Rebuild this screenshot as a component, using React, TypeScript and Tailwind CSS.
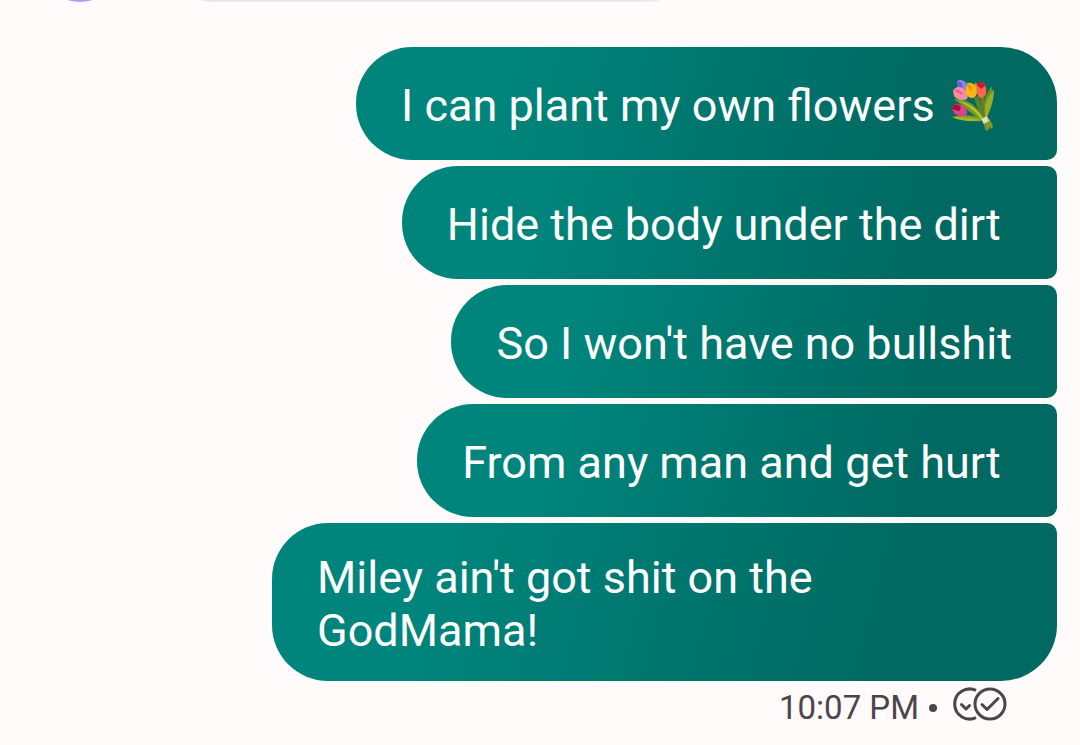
import React from 'react'

interface Message {
    id: number
    text: string
    bouquet?: boolean
}

const MESSAGES: Message[] = [
    { id: 1, text: 'I can plant my own flowers ', bouquet: true },
    { id: 2, text: 'Hide the body under the dirt ' },
    { id: 3, text: "So I won't have no bullshit" },
    { id: 4, text: 'From any man and get hurt ' },
    { id: 5, text: "Miley ain't got shit on the GodMama!" },
]

const BouquetIcon: React.FC = () => (
    <svg
        viewBox="6 7 55 55"
        className="-mt-2 inline-block size-[55px] align-[-11px]"
        role="img"
        aria-label="Bouquet"
    >
        {/* leaves */}
        <path d="M52 16c2 10-1 23-5 32l-5-1c0-12 3-23 10-31z" fill="#6f8f1b" />
        <path d="M54 20c0 11-4 21-8 28l-3-1c1-11 4-20 11-27z" fill="#98ad27" />
        <path d="M36 12l3 9-5 2-1-7z" fill="#8fa82a" />
        <path d="M34 27l5-1 4 22-3-1zM40 27h4l1 20-3-1z" fill="#5f7f2b" />
        <path d="M12 47c10-3 20-2 30 1l-1 3c-10 1-21 0-29-4z" fill="#7d9f22" />
        <path d="M12 47c9 0 20 1 30 3-10 2-21 1-30-3z" fill="#a2b62e" />
        <path d="M14 29c14-1 24 8 29 19l-3 1C33 45 24 37 14 29z" fill="#78981f" />
        <path d="M19 31c11 2 19 9 24 17l-2 1c-5-7-12-13-22-18z" fill="#b3c435" />
        {/* tulips */}
        <path d="M17 11c3-2 7-1 9 2l1 6-5 3-4-4z" fill="#8c86ee" />
        <path d="M17 11l5 2 1 6-4-2z" fill="#6a5dd0" />
        <path d="M13 21c2-5 8-5 12-1 3 3 3 8 2 9-4 2-10 1-13-3z" fill="#f98ba4" />
        <path d="M14 20c4-1 8 1 9 5-4-1-7-3-9-5z" fill="#e8637f" />
        <path d="M27 13c5-1 10 2 10 8 0 4-2 7-5 7-4 0-7-4-6-10z" fill="#fdb714" />
        <path d="M27 13c4 1 6 4 5 9-3-2-5-5-5-9z" fill="#f59700" />
        <path d="M38 13c4-2 7 0 8 5 1 6-1 10-5 10-4-1-6-8-3-15z" fill="#fc6749" />
        <path d="M38 12c3-1 6 1 7 4l-4 3-4-4z" fill="#cf1730" />
        <path d="M13 35c6-2 12 1 14 6 1 3-1 5-4 5-6 1-10-3-11-8z" fill="#dd408c" />
        <path d="M13 35c4-1 7 0 8 3l-2 3-7-2z" fill="#a90f35" />
        {/* stems and band */}
        <path d="M43 51l6-3 4 8-1 3-3-2-1 4-3-1z" fill="#719026" />
        <path d="M47 51l2 8M49 50l3 7" stroke="#9bab36" strokeWidth="1" fill="none" />
        <path d="M41 49l6-3 2 5-5 3z" fill="#e3dfae" />
    </svg>
)

const ReadIcon: React.FC = () => (
    <svg
        viewBox="0 0 54 34"
        className="h-[34px] w-[54px]"
        fill="none"
        stroke="#4d444b"
        strokeWidth="3"
        role="img"
        aria-label="Read"
    >
        <path d="M23 3.400A15 15 0 1 0 23 30.600" />
        <circle cx="37" cy="17" r="15" />
        <path
            d="M8.500 17.500l4.500 4.500 3.500-3.500M29 17.500l5 5L45 11.500"
            strokeLinecap="round"
            strokeLinejoin="round"
        />
    </svg>
)

const App: React.FC = () => (
    <main className="min-h-screen bg-[#fffbfa] font-['Roboto',sans-serif]">
        {/* tail end of the received message above */}
        <header className="flex h-0.5 items-end gap-[37px] overflow-hidden pl-[38px]">
            <div className="size-[84px] shrink-0 rounded-full bg-[#aea5fb]" />
            <div className="h-[113px] w-[543px] rounded-[56px] bg-[#e6e9eb]" />
        </header>

        <ol className="flex flex-col items-end gap-1.5 pt-[45px] pr-[23px]">
            {MESSAGES.map((message) => (
                <li
                    key={message.id}
                    className="flex min-h-[113px] max-w-[785px] items-center rounded-l-[56px] rounded-r-[10px] bg-linear-[105deg,#00857c_20%,#006a62_78%] px-[45px] pt-7 pb-6 text-[45px] leading-[53px] whitespace-pre-wrap text-white first:rounded-tr-[56px] last:rounded-br-[56px]"
                >
                    <p>
                        {message.text}
                        {message.bouquet && (
                            <>
                                <BouquetIcon />{' '}
                            </>
                        )}
                    </p>
                </li>
            ))}
        </ol>

        <footer className="flex items-start justify-end pt-1.5 pr-[73px] text-[33px] leading-[42px] text-[#4d444b]">
            <time>10:07 PM</time>
            <span className="mr-4 ml-2.5 size-2 self-center rounded-full bg-[#4d444b]" />
            <ReadIcon />
        </footer>
    </main>
)

export default App
